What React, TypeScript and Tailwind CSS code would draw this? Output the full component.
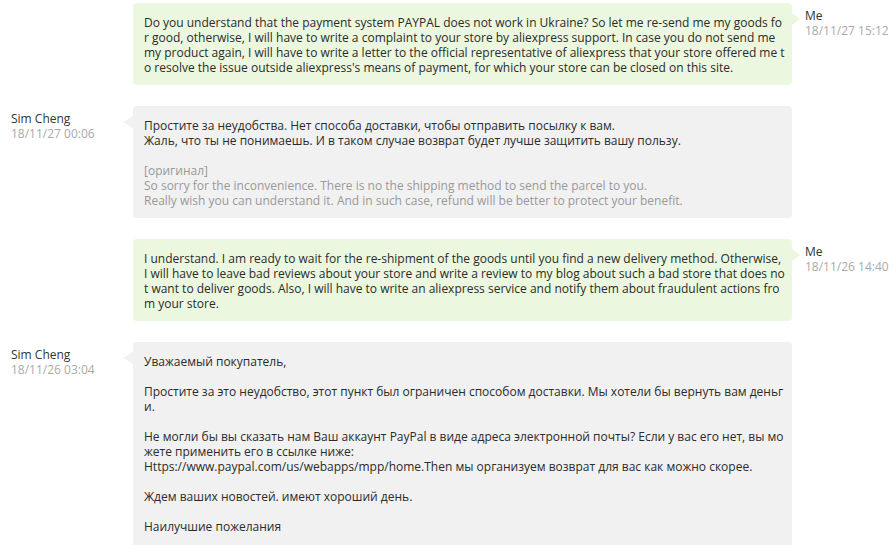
type Side = "me" | "seller";

interface Msg {
	side: Side;
	name: string;
	date: string;
	lines: string[];
	original?: string[];
}

const messages: Msg[] = [
	{
		side: "me",
		name: "Me",
		date: "18/11/27 15:12",
		lines: [
			"Do you understand that the payment system PAYPAL does not work in Ukraine? So let me re-send me my goods fo",
			"r good, otherwise, I will have to write a complaint to your store by aliexpress support. In case you do not send me",
			"my product again, I will have to write a letter to the official representative of aliexpress that your store offered me t",
			"o resolve the issue outside aliexpress's means of payment, for which your store can be closed on this site.",
		],
	},
	{
		side: "seller",
		name: "Sim Cheng",
		date: "18/11/27 00:06",
		lines: [
			"Простите за неудобства. Нет способа доставки, чтобы отправить посылку к вам.",
			"Жаль, что ты не понимаешь. И в таком случае возврат будет лучше защитить вашу пользу.",
		],
		original: [
			"[оригинал]",
			"So sorry for the inconvenience. There is no the shipping method to send the parcel to you.",
			"Really wish you can understand it. And in such case, refund will be better to protect your benefit.",
		],
	},
	{
		side: "me",
		name: "Me",
		date: "18/11/26 14:40",
		lines: [
			"I understand. I am ready to wait for the re-shipment of the goods until you find a new delivery method. Otherwise,",
			"I will have to leave bad reviews about your store and write a review to my blog about such a bad store that does no",
			"t want to deliver goods. Also, I will have to write an aliexpress service and notify them about fraudulent actions fro",
			"m your store.",
		],
	},
	{
		side: "seller",
		name: "Sim Cheng",
		date: "18/11/26 03:04",
		lines: [
			"Уважаемый покупатель,",
			"",
			"Простите за это неудобство, этот пункт был ограничен способом доставки. Мы хотели бы вернуть вам деньг",
			"и.",
			"",
			"Не могли бы вы сказать нам Ваш аккаунт PayPal в виде адреса электронной почты? Если у вас его нет, вы мо",
			"жете применить его в ссылке ниже:",
			"Https://www.paypal.com/us/webapps/mpp/home.Then мы организуем возврат для вас как можно скорее.",
			"",
			"Ждем ваших новостей. имеют хороший день.",
			"",
			"Наилучшие пожелания",
			"",
		],
	},
];

function Author({ name, date }: { name: string; date: string }) {
	return (
		<div className="pt-[5px] text-[12px] leading-[15px]">
			<div className="text-[#333]">{name}</div>
			<div className="text-[#aaa]">{date}</div>
		</div>
	);
}

function Lines({ lines, className = "" }: { lines: string[]; className?: string }) {
	return (
		<>
			{lines.map((l, i) => (
				<div key={i} className={`h-[15px] whitespace-nowrap ${className}`}>
					{l}
				</div>
			))}
		</>
	);
}

function Row({ msg }: { msg: Msg }) {
	const mine = msg.side === "me";
	return (
		<div className="flex">
			<div className="w-[133px] shrink-0 pl-[11px]">
				{!mine && <Author name={msg.name} date={msg.date} />}
			</div>
			<div
				className={`relative w-[659px] shrink-0 rounded-[4px] px-[11px] pt-[12px] pb-[10px] text-[12px] leading-[15px] text-[#2b2b2b] ${
					mine ? "bg-[#ebf7de]" : "bg-[#f1f1f1]"
				}`}
			>
				{mine ? (
					<span className="absolute -right-[8px] top-[10px] h-0 w-0 border-y-[6px] border-l-[8px] border-y-transparent border-l-[#ebf7de]" />
				) : (
					<span className="absolute -left-[10px] top-[10px] h-0 w-0 border-y-[6px] border-r-[10px] border-y-transparent border-r-[#f1f1f1]" />
				)}
				<Lines lines={msg.lines} />
				{msg.original && (
					<>
						<div className="h-[15px]" />
						<Lines lines={msg.original} className="text-[#999]" />
					</>
				)}
			</div>
			<div className="pl-[13px]">{mine && <Author name={msg.name} date={msg.date} />}</div>
		</div>
	);
}

export default function App() {
	return (
		<div className="h-[545px] w-[894px] overflow-hidden bg-white pt-[3px] font-['Open_Sans',sans-serif]">
			<div className="flex flex-col gap-[21px]">
				{messages.map((m, i) => (
					<Row key={i} msg={m} />
				))}
			</div>
		</div>
	);
}
